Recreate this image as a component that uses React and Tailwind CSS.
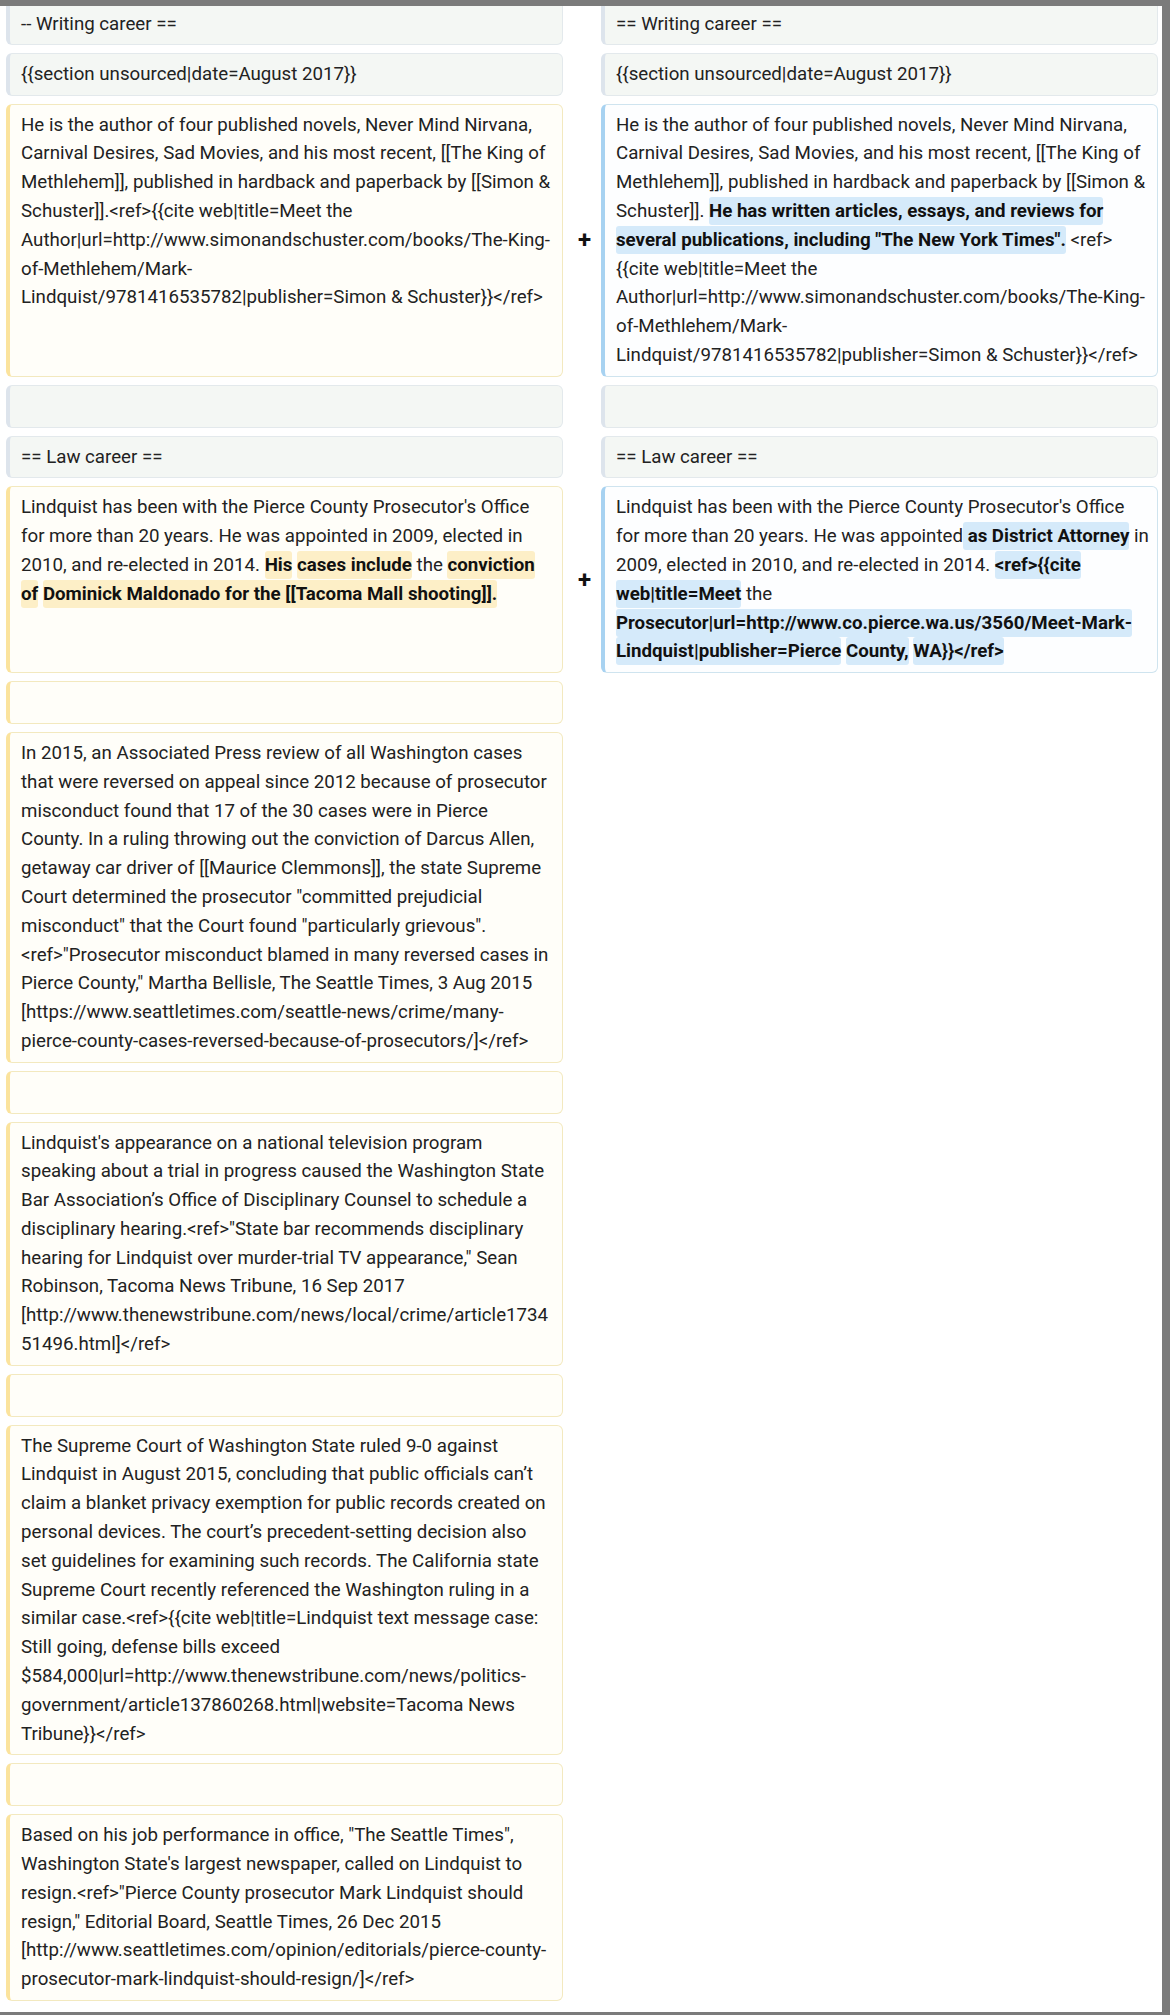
import React from "react";

const base = "rounded-md border border-l-4 pl-[11px] pr-2 py-1.5 text-[18.7px] leading-[28.8px] text-[#222] break-words";

const kinds = {
  ctx: "border-[#e3e9ec] border-l-[#dde4ec] bg-[#f4f7f4]",
  del: "border-[#f3e9bf] border-l-[#fbe39d] bg-[#fffef9]",
  add: "border-[#cfe4ef] border-l-[#a7d2f1] bg-[#fdfeff]",
};

function Cell({ kind, first, children }) {
  if (!kind) return <div />;
  return (
    <div className={`${base} ${kinds[kind]} ${first ? "rounded-t-none border-t-0 pt-[4px] pb-[5px]" : ""}`}>
      {children || "\u00a0"}
    </div>
  );
}

// highlighted words inside a changed paragraph
function Del({ children }) {
  return (
    <span className="box-decoration-clone rounded-[3px] bg-[#fdefc7] py-[3px] font-bold text-[#111]">
      {children}
    </span>
  );
}

function Ins({ children }) {
  return (
    <span className="box-decoration-clone rounded-[3px] bg-[#d5eafa] py-[3px] font-bold text-[#111]">
      {children}
    </span>
  );
}

function Marker({ show }) {
  return (
    <div className="flex items-center justify-center pl-[5px] text-[24px] font-bold leading-none text-[#111]">
      {show ? "+" : ""}
    </div>
  );
}

function Row({ left, right, mark, first }) {
  return (
    <>
      <Cell kind={left && left.kind} first={first}>{left && left.text}</Cell>
      <Marker show={mark} />
      <Cell kind={right && right.kind} first={first}>{right && right.text}</Cell>
    </>
  );
}

export default function App() {
  return (
    <div
      className="box-border flex h-[2015px] w-[1170px] flex-col overflow-hidden border-t-[6px] border-r-[8px] border-b-[3px] border-[#7b7b7b] bg-white"
      style={{ fontFamily: "Roboto, 'Noto Sans', Arial, sans-serif" }}
    >
      <div className="grid grid-cols-[557px_38px_557px] gap-y-2 pl-[6px]">
        <Row
          first
          left={{ kind: "ctx", text: "-- Writing career ==" }}
          right={{ kind: "ctx", text: "== Writing career ==" }}
        />
        <Row
          left={{ kind: "ctx", text: "{{section unsourced|date=August 2017}}" }}
          right={{ kind: "ctx", text: "{{section unsourced|date=August 2017}}" }}
        />
        <Row
          mark
          left={{
            kind: "del",
            text: "He is the author of four published novels, Never Mind Nirvana, Carnival Desires, Sad Movies, and his most recent, [[The King of Methlehem]], published in hardback and paperback by [[Simon & Schuster]].<ref>{{cite web|title=Meet the Author|url=http://www.simonandschuster.com/books/The-King-of-Methlehem/Mark-Lindquist/9781416535782|publisher=Simon & Schuster}}</ref>",
          }}
          right={{
            kind: "add",
            text: (
              <>
                He is the author of four published novels, Never Mind Nirvana, Carnival Desires, Sad Movies, and his most recent, [[The King of Methlehem]], published in hardback and paperback by [[Simon &amp; Schuster]].{" "}
                <Ins>He has written articles, essays, and reviews for several publications, including "The New York Times".</Ins>{" "}
                &lt;ref&gt;<wbr />
                {"{{cite web|title=Meet the Author|url=http://www.simonandschuster.com/books/The-King-of-Methlehem/Mark-Lindquist/9781416535782|publisher=Simon & Schuster}}</ref>"}
              </>
            ),
          }}
        />
        <Row left={{ kind: "ctx", text: "" }} right={{ kind: "ctx", text: "" }} />
        <Row
          left={{ kind: "ctx", text: "== Law career ==" }}
          right={{ kind: "ctx", text: "== Law career ==" }}
        />
        <Row
          mark
          left={{
            kind: "del",
            text: (
              <>
                Lindquist has been with the Pierce County Prosecutor's Office for more than 20 years. He was appointed in 2009, elected in 2010, and re-elected in 2014.{" "}
                <Del>His</Del> <Del>cases include</Del> the <Del>conviction</Del> <Del>of</Del>{" "}
                <Del>Dominick Maldonado for the [[Tacoma Mall shooting]].</Del>
              </>
            ),
          }}
          right={{
            kind: "add",
            text: (
              <>
                Lindquist has been with the Pierce County Prosecutor's Office for more than 20 years. He was appointed
                <Ins> as District Attorney</Ins> in 2009, elected in 2010, and re-elected in 2014.{" "}
                <Ins>{"<ref>{{cite"}</Ins> <Ins>web|title=Meet</Ins> the{" "}
                <Ins>Prosecutor|url=http://www.co.pierce.wa.us/3560/Meet-Mark-Lindquist|publisher=Pierce</Ins>{" "}
                <Ins>County,</Ins> <Ins>{"WA}}</ref>"}</Ins>
              </>
            ),
          }}
        />
        <Row left={{ kind: "del", text: "" }} />
        <Row
          left={{
            kind: "del",
            text: "In 2015, an Associated Press review of all Washington cases that were reversed on appeal since 2012 because of prosecutor misconduct found that 17 of the 30 cases were in Pierce County. In a ruling throwing out the conviction of Darcus Allen, getaway car driver of [[Maurice Clemmons]], the state Supreme Court determined the prosecutor \"committed prejudicial misconduct\" that the Court found \"particularly grievous\".<ref>\"Prosecutor misconduct blamed in many reversed cases in Pierce County,\" Martha Bellisle, The Seattle Times, 3 Aug 2015 [https://www.seattletimes.com/seattle-news/crime/many-pierce-county-cases-reversed-because-of-prosecutors/]</ref>",
          }}
        />
        <Row left={{ kind: "del", text: "" }} />
        <Row
          left={{
            kind: "del",
            text: "Lindquist's appearance on a national television program speaking about a trial in progress caused the Washington State Bar Association’s Office of Disciplinary Counsel to schedule a disciplinary hearing.<ref>\"State bar recommends disciplinary hearing for Lindquist over murder-trial TV appearance,\" Sean Robinson, Tacoma News Tribune, 16 Sep 2017 [http://www.thenewstribune.com/news/local/crime/article173451496.html]</ref>",
          }}
        />
        <Row left={{ kind: "del", text: "" }} />
        <Row
          left={{
            kind: "del",
            text: "The Supreme Court of Washington State ruled 9-0 against Lindquist in August 2015, concluding that public officials can’t claim a blanket privacy exemption for public records created on personal devices. The court’s precedent-setting decision also set guidelines for examining such records. The California state Supreme Court recently referenced the Washington ruling in a similar case.<ref>{{cite web|title=Lindquist text message case: Still going, defense bills exceed $584,000|url=http://www.thenewstribune.com/news/politics-government/article137860268.html|website=Tacoma News Tribune}}</ref>",
          }}
        />
        <Row left={{ kind: "del", text: "" }} />
        <Row
          left={{
            kind: "del",
            text: "Based on his job performance in office, \"The Seattle Times\", Washington State's largest newspaper, called on Lindquist to resign.<ref>\"Pierce County prosecutor Mark Lindquist should resign,\" Editorial Board, Seattle Times, 26 Dec 2015 [http://www.seattletimes.com/opinion/editorials/pierce-county-prosecutor-mark-lindquist-should-resign/]</ref>",
          }}
        />
      </div>
    </div>
  );
}
